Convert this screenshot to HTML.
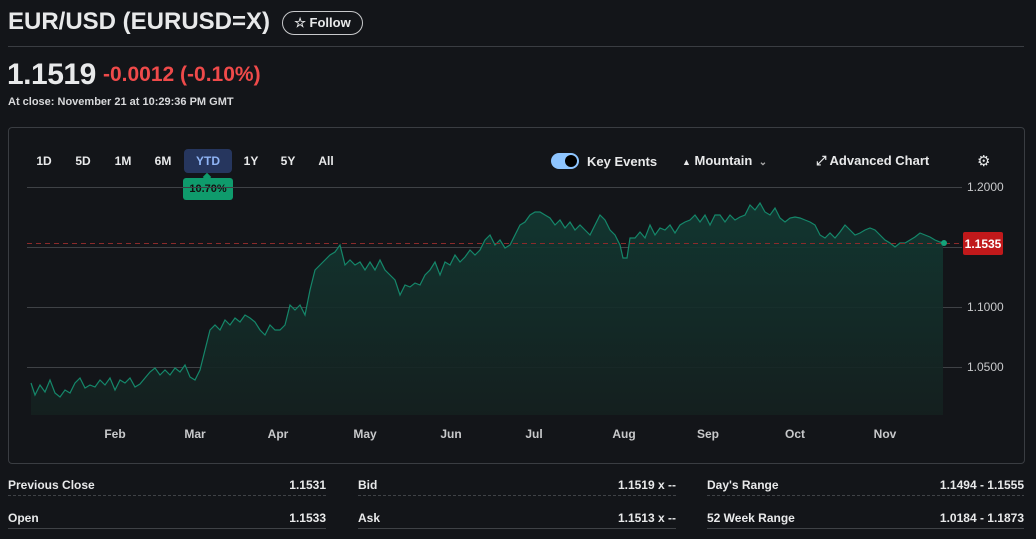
<!DOCTYPE html>
<html><head><meta charset="utf-8"><style>
*{margin:0;padding:0;box-sizing:border-box}
body{width:1036px;height:539px;background:#131519;color:#e8e9ea;font-family:"Liberation Sans",sans-serif;position:relative;overflow:hidden}
.a{position:absolute;white-space:nowrap}
.tab{position:absolute;top:149px;height:24px;font-size:12px;font-weight:700;line-height:24px;text-align:center;color:#e8e9ea}
.st{position:absolute;font-size:12px;font-weight:700;color:#e8e9ea;white-space:nowrap}
.r{text-align:right;width:150px}
</style></head><body>
<div class="a" style="left:8px;top:8px;font-size:24px;font-weight:700">EUR/USD (EURUSD=X)</div>
<div class="a" style="left:282px;top:11px;width:81px;height:24px;border:1px solid #c8c9cb;border-radius:12px;font-size:13px;font-weight:700;line-height:22px;text-align:center">☆ Follow</div>
<div class="a" style="left:8px;top:46px;width:1016px;height:1px;background:#3a3d42"></div>
<div class="a" style="left:7px;top:58px;font-size:30px;font-weight:700;letter-spacing:-0.5px">1.1519</div>
<div class="a" style="left:103px;top:63px;font-size:21px;color:#ef4a4a;font-weight:700">-0.0012&nbsp;(-0.10%)</div>
<div class="a" style="left:8px;top:96px;font-size:11px;font-weight:700;color:#d8d9db">At close: November 21 at 10:29:36 PM GMT</div>
<div class="a" style="left:8px;top:127px;width:1017px;height:337px;border:1px solid #3a3d42;border-radius:4px"></div>
<div class="tab" style="left:30px;width:28px">1D</div>
<div class="tab" style="left:68px;width:30px">5D</div>
<div class="tab" style="left:108px;width:30px">1M</div>
<div class="tab" style="left:148px;width:30px">6M</div>
<div class="tab" style="left:184px;width:48px;background:#26365e;border-radius:4px;color:#8fb4f5">YTD</div>
<div class="tab" style="left:236px;width:30px">1Y</div>
<div class="tab" style="left:273px;width:30px">5Y</div>
<div class="tab" style="left:311px;width:30px">All</div>
<div class="a" style="left:204px;top:174px;width:6px;height:6px;background:#0f9b6c;transform:rotate(45deg)"></div>
<div class="a" style="left:183px;top:178px;width:50px;height:22px;background:#0f9b6c;border-radius:3px;font-size:11px;color:#111;line-height:22px;text-align:center;font-weight:700">10.70%</div>
<div class="a" style="left:551px;top:153px;width:28px;height:16px;background:#8ec5ff;border-radius:8px"></div>
<div class="a" style="left:565px;top:155px;width:12px;height:12px;background:#000;border-radius:6px"></div>
<div class="a" style="left:587px;top:154px;font-size:13px;font-weight:700">Key Events</div>
<div class="a" style="left:682px;top:153px;font-size:13px;font-weight:700"><span style="font-size:9px">▲</span> Mountain <span style="font-size:10px;color:#aaa">&nbsp;⌄</span></div>
<div class="a" style="left:816px;top:153px;font-size:13px;font-weight:700">⤢ Advanced Chart</div>
<div class="a" style="left:977px;top:152px;font-size:15px">⚙</div>
<svg class="a" style="left:0;top:0" width="1036" height="539">
<g stroke="#3f4246" stroke-width="1"><line x1="27" y1="187.5" x2="962" y2="187.5"/><line x1="27" y1="247.5" x2="962" y2="247.5"/><line x1="27" y1="307.5" x2="962" y2="307.5"/><line x1="27" y1="367.5" x2="962" y2="367.5"/></g>
<defs><linearGradient id="g" x1="0" y1="0" x2="0" y2="1"><stop offset="0" stop-color="#123a33"/><stop offset="1" stop-color="#14201f"/></linearGradient></defs>
<path fill="url(#g)" fill-opacity="0.9" d="M31,383 L35,395 40,385 45,392 50,380 55,393 60,397 65,390 70,393 75,383 80,378 85,388 90,385 95,387 100,380 105,385 110,378 115,390 120,380 125,383 130,378 135,387 140,384 145,378 150,372 155,368 160,375 165,370 170,375 175,368 180,372 185,365 190,377 195,380 200,370 205,350 210,330 215,325 220,330 225,320 230,325 235,318 240,322 245,315 250,318 255,322 260,330 265,335 270,325 275,330 280,330 285,325 290,305 295,310 300,305 305,315 310,290 315,270 320,265 325,260 330,255 335,252 340,245 345,265 350,260 355,265 360,262 365,270 370,262 375,270 380,260 385,270 390,275 395,280 400,295 405,285 410,287 415,283 420,285 425,275 430,270 435,262 440,275 445,262 450,265 455,255 460,262 465,257 470,250 475,255 480,250 485,240 490,235 495,245 500,240 505,248 510,245 515,235 520,225 525,222 530,215 535,212 540,212 545,215 550,218 555,225 560,220 565,228 570,222 575,230 580,225 585,230 590,235 595,225 600,215 605,220 610,230 615,235 620,245 623,258 627,258 630,238 635,238 640,232 645,238 650,225 655,235 660,228 665,230 670,225 675,233 680,225 685,222 690,220 695,215 700,222 705,215 710,225 715,215 720,215 725,222 730,215 735,220 740,217 745,215 750,205 755,210 760,203 765,212 770,215 775,208 780,218 785,222 790,218 795,217 800,218 805,220 810,222 815,225 820,235 825,238 830,233 835,238 840,232 845,225 850,230 855,235 860,233 865,230 870,228 875,230 880,235 885,240 890,243 895,247 900,243 905,243 910,240 915,237 920,233 925,235 930,237 935,240 940,242 943,243 L943,415 L31,415 Z"/>
<path fill="none" stroke="#15876a" stroke-width="1.2" d="M31,383 L35,395 40,385 45,392 50,380 55,393 60,397 65,390 70,393 75,383 80,378 85,388 90,385 95,387 100,380 105,385 110,378 115,390 120,380 125,383 130,378 135,387 140,384 145,378 150,372 155,368 160,375 165,370 170,375 175,368 180,372 185,365 190,377 195,380 200,370 205,350 210,330 215,325 220,330 225,320 230,325 235,318 240,322 245,315 250,318 255,322 260,330 265,335 270,325 275,330 280,330 285,325 290,305 295,310 300,305 305,315 310,290 315,270 320,265 325,260 330,255 335,252 340,245 345,265 350,260 355,265 360,262 365,270 370,262 375,270 380,260 385,270 390,275 395,280 400,295 405,285 410,287 415,283 420,285 425,275 430,270 435,262 440,275 445,262 450,265 455,255 460,262 465,257 470,250 475,255 480,250 485,240 490,235 495,245 500,240 505,248 510,245 515,235 520,225 525,222 530,215 535,212 540,212 545,215 550,218 555,225 560,220 565,228 570,222 575,230 580,225 585,230 590,235 595,225 600,215 605,220 610,230 615,235 620,245 623,258 627,258 630,238 635,238 640,232 645,238 650,225 655,235 660,228 665,230 670,225 675,233 680,225 685,222 690,220 695,215 700,222 705,215 710,225 715,215 720,215 725,222 730,215 735,220 740,217 745,215 750,205 755,210 760,203 765,212 770,215 775,208 780,218 785,222 790,218 795,217 800,218 805,220 810,222 815,225 820,235 825,238 830,233 835,238 840,232 845,225 850,230 855,235 860,233 865,230 870,228 875,230 880,235 885,240 890,243 895,247 900,243 905,243 910,240 915,237 920,233 925,235 930,237 935,240 940,242 943,243"/>
<line x1="27" y1="243.5" x2="962" y2="243.5" stroke="#8a2b2b" stroke-dasharray="5,4"/>
<circle cx="944" cy="243" r="3" fill="#15a37a"/>
<g font-family="Liberation Sans" font-size="12" font-weight="700" fill="#c8c9cb" text-anchor="middle"><text x="115" y="438">Feb</text><text x="195" y="438">Mar</text><text x="278" y="438">Apr</text><text x="365" y="438">May</text><text x="451" y="438">Jun</text><text x="534" y="438">Jul</text><text x="624" y="438">Aug</text><text x="708" y="438">Sep</text><text x="795" y="438">Oct</text><text x="885" y="438">Nov</text></g>
<g font-family="Liberation Sans" font-size="12" fill="#c8c9cb"><text x="967" y="191">1.2000</text><text x="967" y="311">1.1000</text><text x="967" y="371">1.0500</text></g>
<rect x="963" y="232" width="40" height="23" rx="2" fill="#c1191b"/>
<text x="983" y="248" font-family="Liberation Sans" font-size="12" font-weight="700" fill="#fff" text-anchor="middle">1.1535</text>
<g stroke="#3f4246"><line x1="8" y1="495.5" x2="326" y2="495.5" stroke-dasharray="3,2"/><line x1="358" y1="495.5" x2="676" y2="495.5" stroke-dasharray="3,2"/><line x1="707" y1="495.5" x2="1024" y2="495.5" stroke-dasharray="3,2"/><line x1="8" y1="528.5" x2="326" y2="528.5"/><line x1="358" y1="528.5" x2="676" y2="528.5"/><line x1="707" y1="528.5" x2="1024" y2="528.5"/></g>
</svg>
<div class="st" style="left:8px;top:478px">Previous Close</div><div class="st r" style="left:176px;top:478px">1.1531</div>
<div class="st" style="left:358px;top:478px">Bid</div><div class="st r" style="left:526px;top:478px">1.1519 x --</div>
<div class="st" style="left:707px;top:478px">Day's Range</div><div class="st r" style="left:874px;top:478px">1.1494 - 1.1555</div>
<div class="st" style="left:8px;top:511px">Open</div><div class="st r" style="left:176px;top:511px">1.1533</div>
<div class="st" style="left:358px;top:511px">Ask</div><div class="st r" style="left:526px;top:511px">1.1513 x --</div>
<div class="st" style="left:707px;top:511px">52 Week Range</div><div class="st r" style="left:874px;top:511px">1.0184 - 1.1873</div>
</body></html>
